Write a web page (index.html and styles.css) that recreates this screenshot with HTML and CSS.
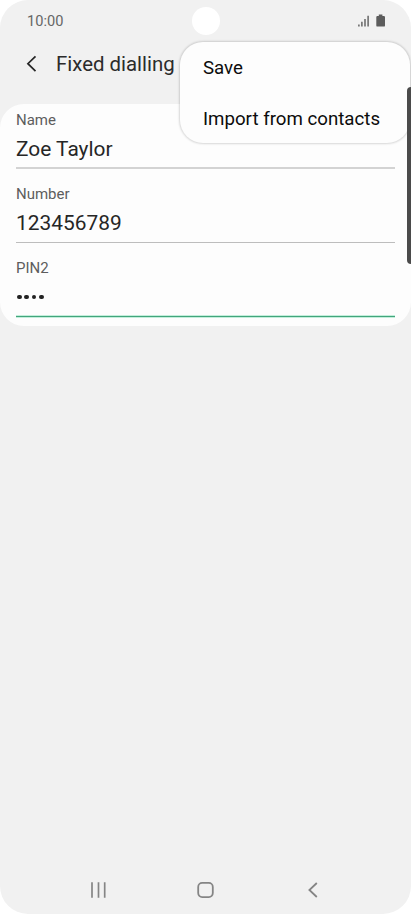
FILE: index.html
```html
<!DOCTYPE html>
<html lang="en">
<head>
<meta charset="utf-8">
<title>Fixed dialling</title>
<link rel="stylesheet" href="styles.css">
</head>
<body>
<div class="phone">
  <div class="status">
    <span class="clock">10:00</span>
    <svg class="status-icons" width="28" height="14" viewBox="0 0 28 14">
      <path d="M.9 10.4v2M3.9 7.7v4.7M7 4.9v7.5M10.1 1.7v10.7" fill="none" stroke="#5c5c5c" stroke-width="1.4"/>
      <path d="M20.8.6h3.600v1.300h1.400q1.200 0 1.200 1.200v8.300q0 1.200-1.200 1.200h-6.300q-1.200 0-1.200-1.200V3.100q0-1.200 1.200-1.200h1.300z" fill="#5c5c5c"/>
    </svg>
    <div class="camera"></div>
  </div>
  <header class="header">
    <svg width="12" height="18" viewBox="0 0 12 18"><path d="M10.500 1.300 2.900 8.700l7.600 7.400" fill="none" stroke="#262626" stroke-width="1.700"/></svg>
    <h1 class="title">Fixed dialling</h1>
  </header>
  <main class="card">
    <div class="field name"><div class="label">Name</div><div class="value">Zoe Taylor</div></div>
    <div class="field"><div class="label">Number</div><div class="value">123456789</div></div>
    <div class="field active"><div class="label">PIN2</div><div class="pin"><i class="dot"></i><i class="dot"></i><i class="dot"></i><i class="dot"></i></div></div>
  </main>
  <nav class="nav">
    <svg width="18" height="18" viewBox="0 0 18 18"><path d="M2 1.200v15.600M8.500 1.200v15.600M14.700 1.200v15.600" fill="none" stroke="#858585" stroke-width="1.700"/></svg>
    <svg width="18" height="18" viewBox="0 0 18 18"><rect x="1.200" y="1.900" width="14.600" height="14.200" rx="4" fill="none" stroke="#858585" stroke-width="1.800"/></svg>
    <svg width="18" height="18" viewBox="0 0 18 18"><path d="M12.800 2 5.400 9l7.400 7" fill="none" stroke="#858585" stroke-width="1.800"/></svg>
  </nav>
  <div class="menu">
    <div class="item">Save</div>
    <div class="item">Import from contacts</div>
  </div>
  <div class="edge"></div>
</div>
</body>
</html>
```
FILE: styles.css
```css
* { box-sizing: border-box; }
body { margin: 0; background: #fff; font-family: Roboto, "Liberation Sans", sans-serif; }
svg { display: block; }
.phone {
  position: relative;
  display: flex;
  flex-direction: column;
  width: 411px;
  height: 914px;
  overflow: hidden;
  background: #f1f1f1;
  border-radius: 28px;
}
.status {
  position: relative;
  display: flex;
  justify-content: space-between;
  align-items: center;
  height: 41px;
  padding: 0 25px 0 27px;
  color: #666;
}
.clock { font-size: 14.6px; line-height: 20px; }
.camera {
  position: absolute;
  top: 7px;
  left: 192px;
  width: 28px;
  height: 28px;
  border-radius: 50%;
  background: #fff;
}
.header {
  display: flex;
  align-items: center;
  gap: 19px;
  height: 46px;
  padding-left: 25px;
}
.title {
  margin: 0;
  color: #2b2b2b;
  font-size: 20.4px;
  font-weight: 400;
  line-height: 28px;
  white-space: nowrap;
}
.card {
  height: 222px;
  margin-top: 17px;
  padding: 0 16px;
  background: #fdfdfd;
  border-radius: 24px;
}
.field {
  height: 65px;
  margin-bottom: 9px;
  border-bottom: 1px solid #bdbdbd;
  padding-top: 7px;
}
.name { border-bottom: 2px solid #d3d3d3; }
.label { color: #5d5d5d; font-size: 15px; line-height: 18px; }
.value { margin-top: 7px; color: #262626; font-size: 20.900px; line-height: 26px; }
.pin { display: flex; gap: 2.600px; padding: 17.500px 0 0 1px; }
.dot { width: 4.700px; height: 4.700px; border-radius: 50%; background: #222; }
.active { border-bottom: 1px solid #43a57c; box-shadow: 0 1px #c3eedb, inset 0 -1px #c3eedb; }
.nav {
  display: flex;
  justify-content: center;
  gap: 89px;
  margin-top: auto;
  padding-bottom: 15px;
}
.menu {
  position: absolute;
  top: 42px;
  left: 180px;
  width: 230px;
  height: 101px;
  padding: 1px 0 0 23px;
  background: #fdfdfd;
  border-radius: 23px;
  box-shadow: 0 0 2px 1px rgba(0, 0, 0, .15);
}
.item { height: 51px; color: #0c0c0c; font-size: 18.700px; line-height: 51px; white-space: nowrap; }
.edge {
  position: absolute;
  top: 87px;
  right: 0;
  width: 4px;
  height: 177px;
  border-radius: 4px 0 0 4px;
  background: #4b4b4b;
}
```
